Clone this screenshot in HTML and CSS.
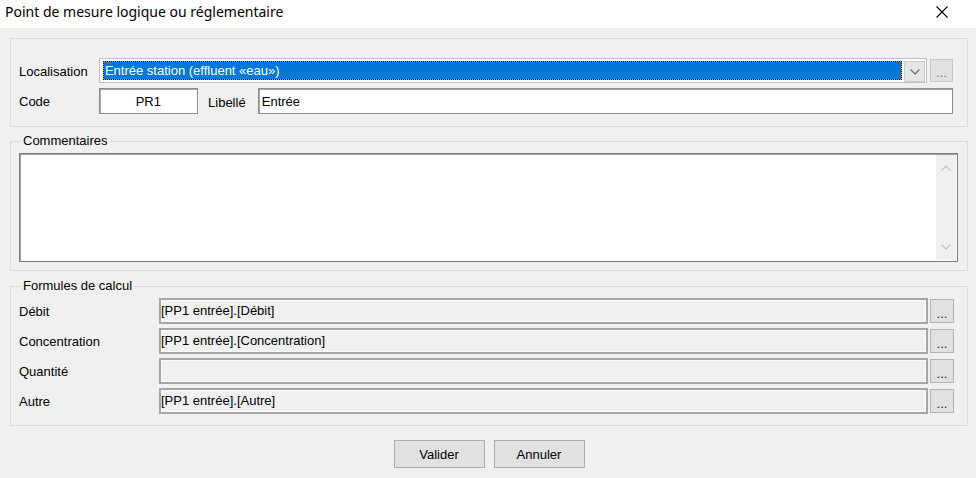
FILE: index.html
```html
<!DOCTYPE html>
<html lang="fr">
<head>
  <meta charset="UTF-8">
  <title>Point de mesure logique ou réglementaire</title>
  <link rel="stylesheet" href="styles.css">
</head>
<body>

<div class="titlebar">
  <span class="title">Point de mesure logique ou réglementaire</span>
  <svg class="close" width="12" height="12" viewBox="0 0 12 12">
    <path d="M0.5 0.5 L11.5 11.5 M11.5 0.5 L0.5 11.5" stroke="#000" stroke-width="1.1" fill="none"/>
  </svg>
</div>

<div class="dialog">

  <!-- Localisation / code -->
  <div class="group group-top">
    <div class="row">
      <span class="lbl">Localisation</span>
      <div class="combo">
        <div class="combo-value">Entrée station (effluent «eau»)</div>
        <div class="combo-arrow">
          <svg width="10" height="6" viewBox="0 0 10 6"><path d="M0.5 0.5 L5 5 L9.5 0.5" stroke="#6a6a6a" stroke-width="1.2" fill="none"/></svg>
        </div>
      </div>
      <button class="dots dots-light">...</button>
    </div>
    <div class="row row-code">
      <span class="lbl">Code</span>
      <div class="field field-code">PR1</div>
      <span class="lbl-libelle">Libellé</span>
      <div class="field field-libelle">Entrée</div>
    </div>
  </div>

  <!-- Commentaires -->
  <fieldset class="group group-comment">
    <legend>Commentaires</legend>
    <div class="memo">
      <div class="memo-scroll">
        <svg width="10" height="6" viewBox="0 0 10 6"><path d="M0.5 5.5 L5 1 L9.5 5.5" stroke="#c2c2c2" stroke-width="1.3" fill="none"/></svg>
        <svg width="10" height="6" viewBox="0 0 10 6"><path d="M0.5 0.5 L5 5 L9.5 0.5" stroke="#c2c2c2" stroke-width="1.3" fill="none"/></svg>
      </div>
    </div>
  </fieldset>

  <!-- Formules -->
  <fieldset class="group group-formula">
    <legend>Formules de calcul</legend>
    <div class="formula-grid">
      <span class="lbl">Débit</span>
      <div class="formula">[PP1 entrée].[Débit]</div>
      <button class="dots">...</button>

      <span class="lbl">Concentration</span>
      <div class="formula">[PP1 entrée].[Concentration]</div>
      <button class="dots">...</button>

      <span class="lbl">Quantité</span>
      <div class="formula"></div>
      <button class="dots">...</button>

      <span class="lbl">Autre</span>
      <div class="formula">[PP1 entrée].[Autre]</div>
      <button class="dots">...</button>
    </div>
  </fieldset>

  <div class="actions">
    <button class="btn">Valider</button>
    <button class="btn">Annuler</button>
  </div>
</div>

</body>
</html>
```

FILE: styles.css
```css
* {
  box-sizing: border-box;
}

body {
  margin: 0;
  width: 976px;
  height: 478px;
  overflow: hidden;
  background-color: #f0f0f0;
  font-family: "Liberation Sans", Arial, sans-serif;
  font-size: 13px;
  color: #000;
}

/* title bar */
.titlebar {
  height: 28px;
  background-color: #fff;
  display: flex;
  align-items: center;
  justify-content: space-between;
  padding: 0 28px 5px 5px;
}

.title {
  font-family: "Noto Sans", "Open Sans", sans-serif;
  font-size: 14px;
}

/* dialog body */
.dialog {
  padding: 10px 8px 0 10px;
}

.group {
  width: 958px;
  border: 1px solid #dcdcdc;
  margin: 0;
}

.group legend {
  font-size: 13px;
  line-height: 14px;
  padding: 0 2px;
  margin-left: 2px;
}

.group-top {
  padding: 19px 14px 12px 8px;
}

.row {
  display: flex;
  align-items: center;
}

.row-code {
  margin-top: 5px;
}

.lbl {
  width: 80px;
  line-height: 16px;
  padding-top: 2px;
}

.combo {
  width: 829px;
  height: 25px;
  border: 1px solid #c2c2c2;
  background-color: #fff;
  display: flex;
  align-items: flex-start;
  padding: 2px 1px 0 3px;
  margin-right: 3px;
}

.combo-value {
  flex: 1;
  height: 19px;
  line-height: 18px;
  color: #fff;
  padding-left: 1px;
  border: 1px dotted #1a1a1a;
  background: linear-gradient(#0078d7, #0078d7) padding-box, #d8903a border-box;
  margin-right: 2px;
}

.combo-arrow {
  width: 21px;
  height: 21px;
  background-color: #e6e6e6;
  border: 1px solid #cfcfcf;
  display: flex;
  align-items: center;
  justify-content: center;
}

.dots {
  width: 23px;
  height: 23px;
  padding: 0 0 2px;
  background-color: #e1e1e1;
  border: 1px solid #b4b4b4;
  font-family: "Liberation Sans", Arial, sans-serif;
  font-size: 13px;
  line-height: 12px;
  color: #222;
  display: flex;
  align-items: flex-end;
  justify-content: center;
}

.dots-light {
  color: #777;
  border-color: #c8c8c8;
}

.field {
  height: 26px;
  background-color: #fff;
  border: 1px solid #8c8c8c;
  box-shadow: inset 1px 1px 0 #a8a8a8;
  line-height: 25px;
}

.field-code {
  width: 100px;
  text-align: center;
}

.lbl-libelle {
  width: 50px;
  margin-left: 10px;
  padding-top: 2px;
}

.field-libelle {
  width: 699px;
  padding-left: 3px;
}

/* commentaires */
.group-comment {
  margin-top: 7px;
  padding: 5px 9px 8px 8px;
}

.memo {
  height: 109px;
  background-color: #fff;
  border: 1px solid #7d7d7d;
  box-shadow: inset 1px 1px 0 #a0a0a0;
  display: flex;
  justify-content: flex-end;
  padding: 1px;
}

.memo-scroll {
  width: 20px;
  background-color: #f0f0f0;
  display: flex;
  flex-direction: column;
  justify-content: space-between;
  align-items: center;
  padding: 10px 0 10px;
}

/* formules */
.group-formula {
  margin-top: 8px;
  padding: 5px 13px 11px 8px;
}

.formula-grid {
  display: grid;
  grid-template-columns: 138px 769px 24px;
  grid-auto-rows: 26px;
  column-gap: 2px;
  row-gap: 4px;
  align-items: center;
}

.formula {
  height: 26px;
  border: 2px solid #a6a6a6;
  box-shadow: inset 0 0 0 1px #fafafa;
  background-color: #f0f0f0;
  line-height: 22px;
  padding-left: 0;
}

.formula-grid .dots {
  width: 24px;
  height: 24px;
}

/* boutons */
.actions {
  display: flex;
  justify-content: center;
  gap: 9px;
  margin-top: 14px;
}

.btn {
  width: 91px;
  height: 28px;
  background-color: #e1e1e1;
  border: 1px solid #adadad;
  font-family: "Liberation Sans", Arial, sans-serif;
  font-size: 13px;
  color: #000;
  padding: 0;
}
```
